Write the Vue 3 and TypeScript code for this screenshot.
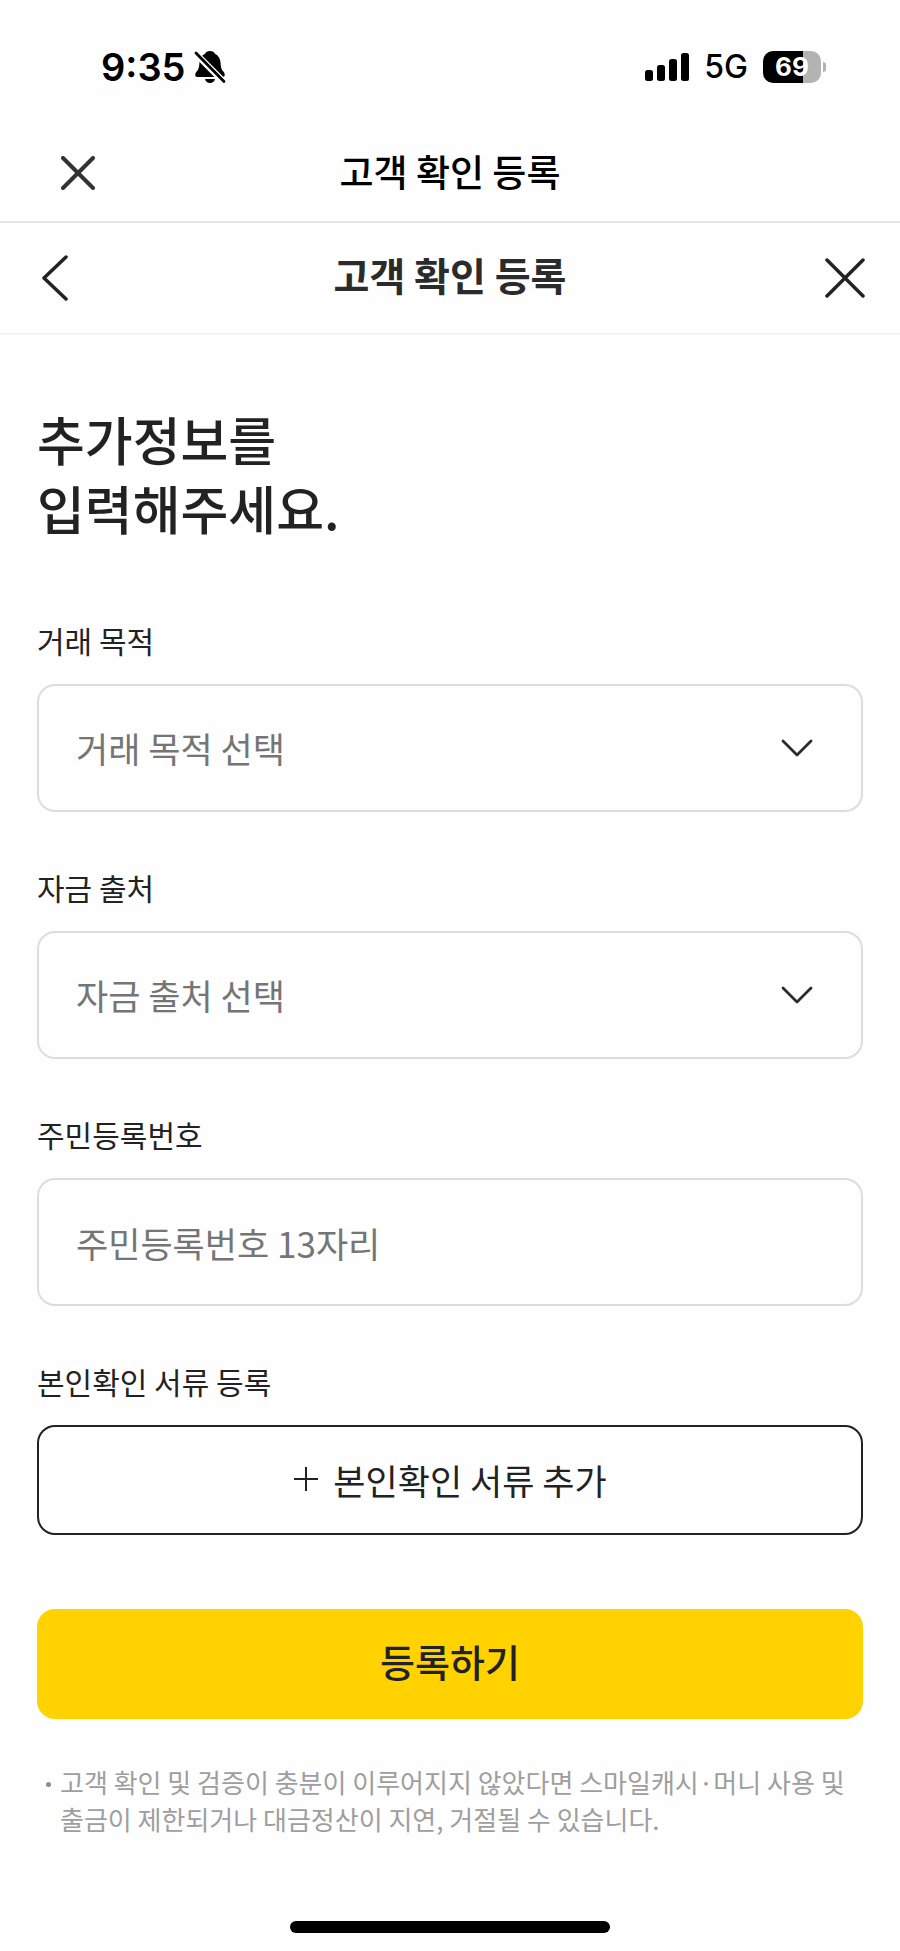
<script setup lang="ts">
import { ref } from 'vue'

interface SelectField {
  id: string
  label: string
  placeholder: string
  options: string[]
}

const batteryLevel = 69

const selectFields: SelectField[] = [
  { id: 'purpose', label: '거래 목적', placeholder: '거래 목적 선택', options: [] },
  { id: 'source', label: '자금 출처', placeholder: '자금 출처 선택', options: [] },
]

const selected = ref<Record<string, string>>({ purpose: '', source: '' })
const residentNumber = ref('')

const signalBars = [
  { x: 0, height: 11 },
  { x: 12, height: 16 },
  { x: 24, height: 22 },
  { x: 36, height: 28 },
]
</script>

<template>
  <div class="page">
    <div class="status-bar">
      <div class="status-left">
        <span class="time">9:35</span>
        <svg class="bell" viewBox="0 0 32 34" width="32" height="34" aria-hidden="true">
          <path
            d="M16 1c-2.600 0-4.200 1-4.900 2.800C7.500 5.500 5.600 8.700 5.400 13c-.2 4.500-.9 6.500-3.100 9-1.500 1.800-1.500 5 1 5h25.400c2.500 0 2.500-3.200 1-5-2.200-2.500-2.900-4.500-3.100-9-.2-4.300-2.100-7.500-5.700-9.200C20.200 2 18.600 1 16 1z"
          />
          <path d="M11 29h10c-.6 2.500-2.600 4-5 4s-4.400-1.500-5-4z" />
          <path d="M0 2l32 32" stroke="#fefefe" stroke-width="6.500" />
          <path d="M2 3l28 28.500" stroke="#000" stroke-width="2.800" stroke-linecap="round" />
        </svg>
      </div>
      <div class="status-right">
        <svg viewBox="0 0 44 28" width="44" height="28" aria-hidden="true">
          <rect
            v-for="bar in signalBars"
            :key="bar.x"
            :x="bar.x"
            :y="28 - bar.height"
            width="8"
            :height="bar.height"
            rx="2.500"
          />
        </svg>
        <span class="network">5G</span>
        <div class="battery">
          <span
            class="battery-body"
            :style="{ backgroundImage: `linear-gradient(90deg, #000 ${batteryLevel}%, #b3b3b3 ${batteryLevel}%)` }"
          >{{ batteryLevel }}</span>
          <span class="battery-tip"></span>
        </div>
      </div>
    </div>

    <header class="bar app-bar">
      <button type="button" class="icon-button" aria-label="닫기">
        <svg viewBox="0 0 34 34" width="34" height="34" aria-hidden="true">
          <path d="M2 2l30 30M32 2L2 32" stroke="#333335" stroke-width="4" stroke-linecap="round" />
        </svg>
      </button>
      <div class="bar-title">고객 확인 등록</div>
    </header>

    <header class="bar sub-bar">
      <button type="button" class="icon-button back" aria-label="뒤로">
        <svg viewBox="0 0 26 46" width="26" height="46" aria-hidden="true">
          <path
            d="M24 2L2 23l22 21"
            fill="none"
            stroke="#222"
            stroke-width="3.500"
            stroke-linecap="round"
            stroke-linejoin="round"
          />
        </svg>
      </button>
      <h1 class="bar-title">고객 확인 등록</h1>
      <button type="button" class="icon-button end" aria-label="닫기">
        <svg viewBox="0 0 40 40" width="40" height="40" aria-hidden="true">
          <path d="M2 2l36 36M38 2L2 38" stroke="#222" stroke-width="3.500" stroke-linecap="round" />
        </svg>
      </button>
    </header>

    <main class="content">
      <h2 class="heading">추가정보를<br />입력해주세요.</h2>

      <form @submit.prevent>
        <div v-for="field in selectFields" :key="field.id" class="field">
          <label :for="field.id">{{ field.label }}</label>
          <div class="select-wrap">
            <select :id="field.id" v-model="selected[field.id]" class="control">
              <option value="">{{ field.placeholder }}</option>
              <option v-for="option in field.options" :key="option">{{ option }}</option>
            </select>
            <svg class="chevron" viewBox="0 0 32 18" width="32" height="18" aria-hidden="true">
              <path
                d="M2 2l14 14L30 2"
                fill="none"
                stroke="#2b2b2b"
                stroke-width="2.800"
                stroke-linecap="round"
                stroke-linejoin="round"
              />
            </svg>
          </div>
        </div>

        <div class="field">
          <label for="resident">주민등록번호</label>
          <input
            id="resident"
            v-model="residentNumber"
            class="control"
            type="text"
            inputmode="numeric"
            maxlength="13"
            placeholder="주민등록번호 13자리"
          />
        </div>

        <div class="field">
          <label for="document">본인확인 서류 등록</label>
          <button id="document" type="button" class="button outline">
            <svg viewBox="0 0 26 26" width="26" height="26" aria-hidden="true">
              <path d="M1 13h24M13 1v24" stroke="#222" stroke-width="2" />
            </svg>
            본인확인 서류 추가
          </button>
        </div>

        <button type="submit" class="button primary">등록하기</button>
      </form>

      <ul class="notes">
        <li>고객 확인 및 검증이 충분이 이루어지지 않았다면 스마일캐시·머니 사용 및 출금이 제한되거나 대금정산이 지연, 거절될 수 있습니다.</li>
      </ul>
    </main>

    <div class="home-indicator"></div>
  </div>
</template>

<style>
body {
  margin: 0;
  background: #fefefe;
}
</style>

<style scoped>
.page {
  box-sizing: border-box;
  min-height: 100vh;
  display: flex;
  flex-direction: column;
  padding-bottom: 18px;
  background: #fefefe;
  color: #222;
  font-family: "Noto Sans CJK KR", sans-serif;
}

.page *,
.page *::before {
  box-sizing: border-box;
}

svg {
  display: block;
  flex: none;
}

.status-bar {
  display: flex;
  align-items: center;
  justify-content: space-between;
  height: 124px;
  padding: 10px 74px 0 101px;
  color: #000;
  font-family: Inter, "Liberation Sans", sans-serif;
}

.status-left {
  display: flex;
  align-items: center;
  gap: 8px;
}

.status-right {
  display: flex;
  align-items: center;
  gap: 15px;
}

.time {
  font-size: 38px;
  font-weight: 600;
  line-height: 44px;
}

.network {
  font-size: 32px;
  font-weight: 500;
  line-height: 40px;
}

.battery {
  display: flex;
  align-items: center;
  gap: 2px;
}

.battery-body {
  width: 58px;
  border-radius: 10px;
  color: #fff;
  font-size: 26px;
  font-weight: 700;
  line-height: 32px;
  text-align: center;
}

.battery-tip {
  width: 3px;
  height: 10px;
  border-radius: 0 5px 5px 0;
  background: #b3b3b3;
}

.bar {
  display: grid;
  grid-template-columns: 1fr auto 1fr;
  align-items: center;
}

.app-bar {
  min-height: 99px;
  padding: 0 61px;
  border-bottom: 2px solid #e5e5e5;
  color: #000;
}

.sub-bar {
  min-height: 112px;
  padding: 0 35px;
  border-bottom: 2px solid #f5f5f5;
  color: #2b2b2b;
}

.bar-title {
  margin: 0;
  padding-bottom: 4px;
  font-size: 37px;
  font-weight: 500;
  line-height: 54px;
}

.sub-bar .bar-title {
  padding-bottom: 8px;
  font-size: 39px;
  font-weight: 700;
}

.icon-button {
  justify-self: start;
  padding: 0;
  border: 0;
  background: none;
  cursor: pointer;
}

.icon-button.back {
  padding-left: 7px;
}

.icon-button.end {
  justify-self: end;
}

.content {
  padding: 69px 37px 0;
}

.heading {
  margin: 0 0 76px;
  font-size: 52px;
  font-weight: 500;
  line-height: 69px;
}

.field {
  display: flex;
  flex-direction: column;
  gap: 21px;
  margin-bottom: 53px;
}

.field label {
  font-size: 30px;
  line-height: 45px;
}

.select-wrap {
  display: grid;
  align-items: center;
}

.select-wrap > * {
  grid-area: 1 / 1;
}

.chevron {
  justify-self: end;
  margin-right: 50px;
  pointer-events: none;
}

.control {
  width: 100%;
  height: 128px;
  margin: 0;
  padding: 0 37px;
  border: 2px solid #ddd;
  border-radius: 18px;
  appearance: none;
  background: transparent;
  color: #757575;
  font-family: inherit;
  font-size: 35px;
  line-height: 52px;
}

.control::placeholder {
  color: #757575;
  opacity: 1;
}

.button {
  display: flex;
  align-items: center;
  justify-content: center;
  gap: 14px;
  width: 100%;
  min-height: 110px;
  padding: 0 37px 4px;
  border: 0;
  border-radius: 18px;
  color: #222;
  font-family: inherit;
  cursor: pointer;
}

.outline {
  padding-bottom: 2px;
  border: 2px solid #222;
  background: transparent;
  font-size: 35px;
}

.primary {
  margin-top: 74px;
  padding-bottom: 8px;
  background: #ffd200;
  font-size: 38px;
  font-weight: 500;
}

.notes {
  margin: 44px 0 0;
  padding: 0;
  list-style: none;
  color: #9e9e9e;
  font-size: 26px;
  line-height: 37px;
}

.notes li {
  display: flex;
  padding-left: 9px;
  word-break: keep-all;
}

.notes li::before {
  content: "";
  flex: none;
  width: 5px;
  height: 5px;
  margin: 19px 9px 0 0;
  border-radius: 50%;
  background: #8c8c8c;
}

.home-indicator {
  width: 320px;
  height: 12px;
  margin: auto auto 0;
  border-radius: 6px;
  background: #000;
}
</style>
